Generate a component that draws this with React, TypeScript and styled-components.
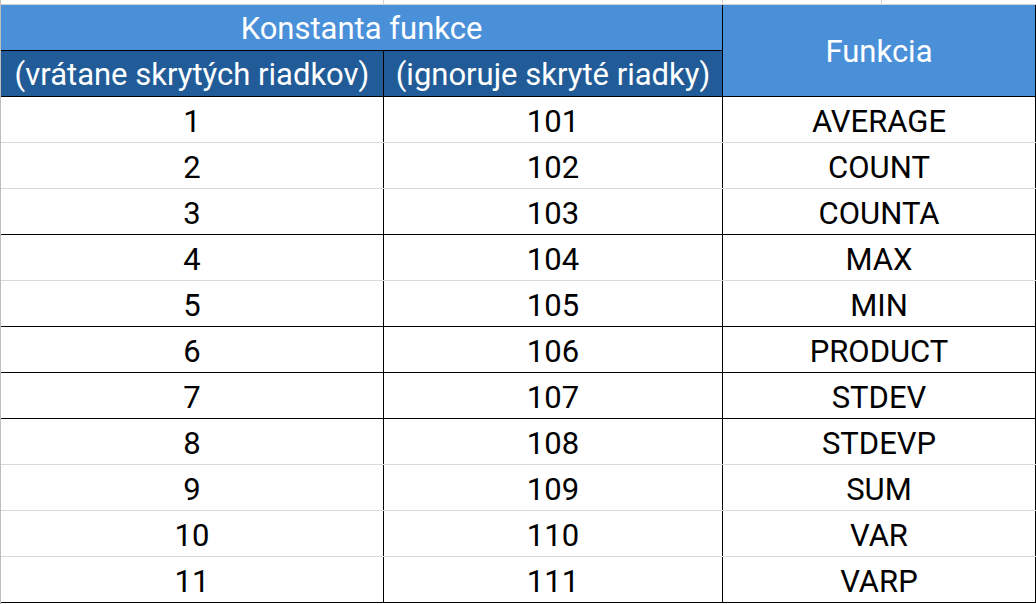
import React from 'react';
import styled, { createGlobalStyle } from 'styled-components';

const GlobalStyle = createGlobalStyle`
  html, body {
    margin: 0;
    padding: 0;
    background: #ffffff;
  }
`;

interface Row {
  all: number;
  visible: number;
  name: string;
  strong: boolean;
}

const rows: Row[] = [
  { all: 1, visible: 101, name: 'AVERAGE', strong: false },
  { all: 2, visible: 102, name: 'COUNT', strong: false },
  { all: 3, visible: 103, name: 'COUNTA', strong: true },
  { all: 4, visible: 104, name: 'MAX', strong: false },
  { all: 5, visible: 105, name: 'MIN', strong: true },
  { all: 6, visible: 106, name: 'PRODUCT', strong: true },
  { all: 7, visible: 107, name: 'STDEV', strong: true },
  { all: 8, visible: 108, name: 'STDEVP', strong: false },
  { all: 9, visible: 109, name: 'SUM', strong: false },
  { all: 10, visible: 110, name: 'VAR', strong: false },
  { all: 11, visible: 111, name: 'VARP', strong: true },
];

const App = () => {
  return (
    <>
      <GlobalStyle />
      <Sheet>
        <TopStrip>
          <StripCell $w={383} />
          <StripCell $w={339} />
          <StripCell $w={159} />
          <StripCell $w={155} />
        </TopStrip>
        <Table>
          <colgroup>
            <col style={{ width: 383 }} />
            <col style={{ width: 339 }} />
            <col style={{ width: 313 }} />
          </colgroup>
          <thead>
            <tr>
              <HeadCell colSpan={2} $tone="light" $h={45}>
                Konstanta funkce
              </HeadCell>
              <HeadCell rowSpan={2} $tone="light" $h={91}>
                Funkcia
              </HeadCell>
            </tr>
            <tr>
              <HeadCell $tone="dark" $h={46}>
                (vrátane skrytých riadkov)
              </HeadCell>
              <HeadCell $tone="dark" $h={46}>
                (ignoruje skryté riadky)
              </HeadCell>
            </tr>
          </thead>
          <tbody>
            {rows.map((row) => (
              <tr key={row.all}>
                <Cell $strong={row.strong}>{row.all}</Cell>
                <Cell $strong={row.strong}>{row.visible}</Cell>
                <Cell $strong={row.strong}>{row.name}</Cell>
              </tr>
            ))}
          </tbody>
        </Table>
      </Sheet>
    </>
  );
};

export default App;

const Sheet = styled.div`
  width: 1036px;
  height: 604px;
  overflow: hidden;
  background: #ffffff;
  border-left: 1px solid #bdbdbd;
  box-sizing: border-box;
`;

const TopStrip = styled.div`
  display: flex;
  height: 4px;
  border-bottom: 1px solid #d4d4d4;
`;

const StripCell = styled.div<{ $w: number }>`
  width: ${(p) => p.$w}px;
  flex: none;
  box-sizing: border-box;
  border-right: 1px solid #d4d4d4;
`;

const Table = styled.table`
  border-collapse: collapse;
  table-layout: fixed;
  width: 1035px;
  margin-left: -1px;
`;

const HeadCell = styled.th<{ $tone: 'light' | 'dark'; $h: number }>`
  height: ${(p) => p.$h}px;
  padding: 2px 2px 0;
  box-sizing: border-box;
  background: ${(p) => (p.$tone === 'light' ? '#4a90d9' : '#215c98')};
  color: #ffffff;
  font-family: Roboto, 'Liberation Sans', sans-serif;
  font-weight: 400;
  font-size: 31px;
  line-height: 1;
  white-space: nowrap;
  text-align: center;
  vertical-align: middle;
  border: 1px solid #000000;
  border-top: none;
  overflow: hidden;

  &:first-child {
    border-left: 1px solid #bdbdbd;
  }
`;

const Cell = styled.td<{ $strong: boolean }>`
  height: 46px;
  padding: 5px 0 0;
  box-sizing: border-box;
  font-family: Roboto, 'Liberation Sans', sans-serif;
  font-size: 31px;
  line-height: 1;
  color: #000000;
  text-align: center;
  vertical-align: middle;
  border-left: 1px solid #000000;
  border-right: 1px solid #000000;
  border-bottom: 1px solid ${(p) => (p.$strong ? '#000000' : '#d9d9d9')};

  &:first-child {
    border-left: 1px solid #bdbdbd;
  }
`;
